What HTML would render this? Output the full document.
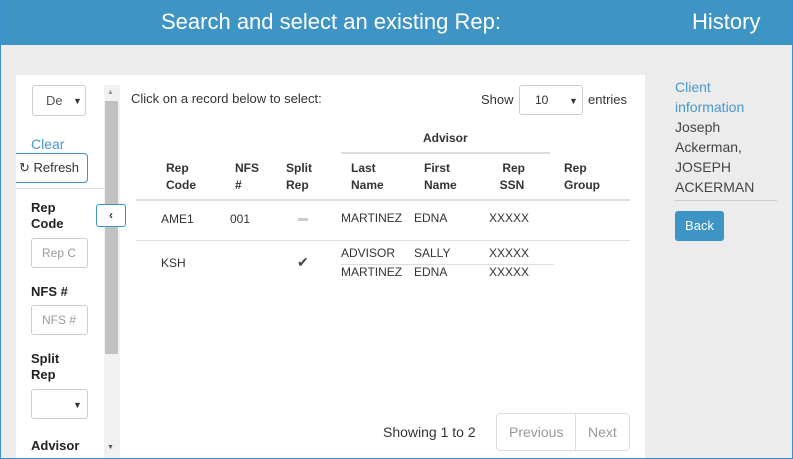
<!DOCTYPE html>
<html><head><meta charset="utf-8"><style>
*{box-sizing:border-box;margin:0;padding:0}
body{width:793px;height:459px;overflow:hidden;font-family:"Liberation Sans",Arial,sans-serif;font-size:13px;color:#333;background:#ececec;position:relative}
.frame{position:absolute;left:0;top:0;width:793px;height:459px;border:1px solid #3a8fd0;border-top:none;pointer-events:none;z-index:9}
.hdr{position:absolute;left:0;top:0;width:793px;height:45px;background:#3d94c5;color:#fff;font-size:22px}
.a{position:absolute;white-space:nowrap}
.panel{position:absolute;left:16px;top:75px;width:629px;height:384px;background:#fff}
.b{font-weight:bold}
.sel{position:absolute;border:1px solid #ccc;border-radius:3px;background:#fff}
.tri{position:absolute;font-size:9px;color:#333}
.hl{position:absolute;height:2px;background:#ddd}
.l1{position:absolute;height:1px;background:#ddd}
</style></head><body>
<div class="hdr"><span class="a" style="left:161px;top:9px">Search and select an existing Rep:</span><span class="a" style="left:692px;top:9px">History</span></div>
<div class="panel"></div>
<!-- sidebar -->
<div class="sel" style="left:32px;top:85px;width:54px;height:31px"></div><span class="a" style="left:46px;top:93px;color:#555">De</span><span class="tri" style="left:73px;top:96px">▼</span>
<span class="a" style="left:31px;top:136px;color:#4a97cc;font-size:14px">Clear</span>
<div class="a" style="left:16px;top:153px;width:72px;height:30px;border:1px solid #3d94c5;border-left:none;border-radius:0 4px 4px 0"></div>
<span class="a" style="left:19px;top:160px;font-size:13px">&#x21bb; Refresh</span>
<div class="l1" style="left:16px;top:188px;width:88px"></div>
<span class="a b" style="left:31px;top:200px;line-height:16px;color:#222">Rep<br>Code</span>
<div class="sel" style="left:31px;top:238px;width:57px;height:30px"></div><span class="a" style="left:42px;top:246px;color:#999;font-size:12px">Rep C</span>
<span class="a b" style="left:31px;top:284px;color:#222">NFS #</span>
<div class="sel" style="left:31px;top:305px;width:57px;height:30px"></div><span class="a" style="left:42px;top:313px;color:#999;font-size:12px">NFS #</span>
<span class="a b" style="left:31px;top:351px;line-height:16px;color:#222">Split<br>Rep</span>
<div class="sel" style="left:31px;top:389px;width:57px;height:30px"></div><span class="tri" style="left:73px;top:400px">▼</span>
<span class="a b" style="left:31px;top:438px;color:#222">Advisor</span>
<!-- scrollbar -->
<div class="a" style="left:104px;top:85px;width:16px;height:374px;background:#f1f1f1"></div>
<div class="a" style="left:105px;top:101px;width:13px;height:253px;background:#c1c1c1"></div>
<span class="a" style="left:107px;top:89px;font-size:7px;color:#999">▲</span>
<span class="a" style="left:107px;top:444px;font-size:7px;color:#555">▼</span>
<div class="a" style="left:96px;top:204px;width:30px;height:23px;border:1px solid #3d94c5;border-radius:3px;background:#fff;text-align:center;font-size:12px;font-weight:bold;line-height:20px;color:#333">‹</div>
<!-- main -->
<span class="a" style="left:131px;top:91px">Click on a record below to select:</span>
<span class="a" style="left:481px;top:92px">Show</span>
<div class="sel" style="left:519px;top:85px;width:64px;height:30px"></div><span class="a" style="left:535px;top:93px;font-size:12px">10</span><span class="tri" style="left:569px;top:96px">▼</span>
<span class="a" style="left:588px;top:92px">entries</span>
<span class="a b" style="left:423px;top:131px;font-size:12px">Advisor</span>
<div class="hl" style="left:341px;top:152px;width:209px"></div>
<div class="a b" style="font-size:12px;line-height:17px;top:160px;left:0;width:0"></div>
<span class="a b" style="left:166px;top:160px;font-size:12px;line-height:17px">Rep<br>Code</span>
<span class="a b" style="left:235px;top:160px;font-size:12px;line-height:17px">NFS<br>#</span>
<span class="a b" style="left:286px;top:160px;font-size:12px;line-height:17px">Split<br>Rep</span>
<span class="a b" style="left:351px;top:160px;font-size:12px;line-height:17px">Last<br>Name</span>
<span class="a b" style="left:424px;top:160px;font-size:12px;line-height:17px">First<br>Name</span>
<span class="a b" style="left:499px;top:160px;font-size:12px;line-height:17px;text-align:center">&nbsp;Rep<br>SSN</span>
<span class="a b" style="left:564px;top:160px;font-size:12px;line-height:17px">Rep<br>Group</span>
<div class="hl" style="left:136px;top:199px;width:494px"></div>
<span class="a" style="left:161px;top:212px;font-size:12px">AME1</span>
<span class="a" style="left:230px;top:212px;font-size:12px">001</span>
<div class="a" style="left:298px;top:218px;width:10px;height:3px;background:#ccc"></div>
<span class="a" style="left:341px;top:211px;font-size:12px">MARTINEZ</span>
<span class="a" style="left:414px;top:211px;font-size:12px">EDNA</span>
<span class="a" style="left:489px;top:211px;font-size:12px">XXXXX</span>
<div class="l1" style="left:136px;top:240px;width:494px"></div>
<span class="a" style="left:161px;top:256px;font-size:12px">KSH</span>
<span class="a" style="left:297px;top:254px;font-size:14px;color:#444">✔</span>
<span class="a" style="left:341px;top:246px;font-size:12px">ADVISOR</span>
<span class="a" style="left:414px;top:246px;font-size:12px">SALLY</span>
<span class="a" style="left:489px;top:246px;font-size:12px">XXXXX</span>
<div class="l1" style="left:341px;top:264px;width:213px"></div>
<span class="a" style="left:341px;top:265px;font-size:12px">MARTINEZ</span>
<span class="a" style="left:414px;top:265px;font-size:12px">EDNA</span>
<span class="a" style="left:489px;top:265px;font-size:12px">XXXXX</span>
<span class="a" style="left:383px;top:424px;font-size:14px">Showing 1 to 2</span>
<div class="a" style="left:496px;top:413px;width:134px;height:38px;border:1px solid #ddd;border-radius:4px"></div>
<div class="a" style="left:575px;top:413px;width:1px;height:38px;background:#ddd"></div>
<span class="a" style="left:509px;top:424px;font-size:14px;color:#999">Previous</span>
<span class="a" style="left:588px;top:424px;font-size:14px;color:#999">Next</span>
<!-- right -->
<span class="a" style="left:675px;top:77px;font-size:14px;line-height:20px;color:#4a97cc">Client<br>information</span>
<span class="a" style="left:675px;top:117px;font-size:14px;line-height:20px;color:#444">Joseph<br>Ackerman,<br>JOSEPH<br>ACKERMAN</span>
<div class="l1" style="left:675px;top:200px;width:102px;background:#ccc"></div>
<div class="a" style="left:675px;top:211px;width:49px;height:30px;background:#3d94c5;border-radius:3px;color:#fff;font-size:13px;text-align:center;line-height:30px">Back</div>
<div class="frame"></div>
</body></html>
